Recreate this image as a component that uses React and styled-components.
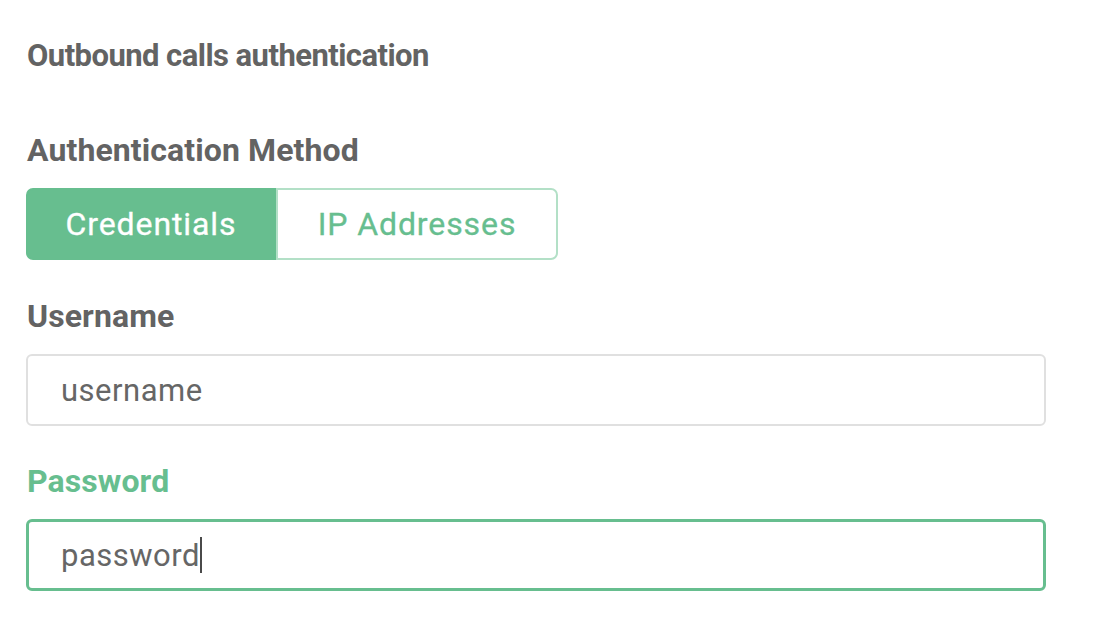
import React from 'react'
import styled, { createGlobalStyle } from 'styled-components'

const GREEN = '#67be8f'

const Global = createGlobalStyle`
  body {
    margin: 0;
    background: #fff;
    font-family: Roboto, "Liberation Sans", sans-serif;
  }
`

const Page = styled.div`
  padding: 38px 48px 0 26px;
  width: 1020px;
`

const Title = styled.h2`
  margin: 0 0 0 1px;
  font-size: 31px;
  font-weight: 700;
  letter-spacing: -0.55px;
  color: #636363;
  line-height: 36px;
`

const Label = styled.div`
  margin: ${p => p.$top}px 0 0 1px;
  font-size: 32px;
  font-weight: 700;
  letter-spacing: 0.1px;
  color: ${p => (p.$active ? GREEN : '#636363')};
  line-height: 36px;
`

const Segment = styled.div`
  display: flex;
  margin-top: 20px;
`

const SegButton = styled.button`
  height: 72px;
  width: ${p => p.$w}px;
  box-sizing: border-box;
  font-family: inherit;
  font-size: 32px;
  font-weight: 400;
  letter-spacing: 0.9px;
  -webkit-text-stroke: 0.3px currentColor;
  cursor: pointer;
  background: ${p => (p.$on ? GREEN : '#fff')};
  color: ${p => (p.$on ? '#fff' : GREEN)};
  border: 2px solid ${p => (p.$on ? GREEN : '#b3e0c7')};
  border-radius: ${p => (p.$first ? '7px 0 0 7px' : '0 7px 7px 0')};
  padding: 0;
`

const Input = styled.div`
  margin-top: 20px;
  height: 72px;
  box-sizing: border-box;
  border: ${p => (p.$focus ? `3px solid ${GREEN}` : '2px solid #e0e0e0')};
  border-radius: 6px;
  display: flex;
  align-items: center;
  padding-left: ${p => (p.$focus ? 32 : 33)}px;
  font-size: 31px;
  color: #666;
  letter-spacing: 0.5px;
`

const Caret = styled.span`
  display: inline-block;
  width: 2px;
  height: 36px;
  background: #4a4a4a;
`

export default function App() {
  return (
    <>
      <Global />
      <Page>
        <Title>Outbound calls authentication</Title>
        <Label $top={58}>Authentication Method</Label>
        <Segment>
          <SegButton $on $first $w={250}>Credentials</SegButton>
          <SegButton $w={282}>IP Addresses</SegButton>
        </Segment>
        <Label $top={38}>Username</Label>
        <Input>username</Input>
        <Label $top={37} $active>Password</Label>
        <Input $focus>password<Caret /></Input>
      </Page>
    </>
  )
}
